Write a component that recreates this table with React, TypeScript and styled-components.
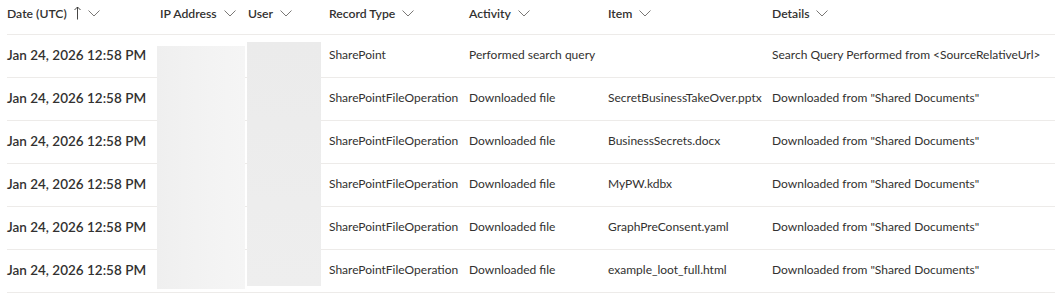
import React from "react";
import styled, { createGlobalStyle } from "styled-components";

const Global = createGlobalStyle`
  html, body { margin: 0; padding: 0; background: #ffffff; }
  body { font-family: Lato, "Noto Sans", sans-serif; color: #323130; }
`;

const Wrap = styled.div`
  position: relative;
  width: 1055px;
  height: 293px;
  overflow: hidden;
  padding-left: 7px;
  box-sizing: border-box;
`;

const COLS = "153px 88px 81px 140px 139px 164px 1fr";

const HeaderRow = styled.div`
  display: grid;
  grid-template-columns: ${COLS};
  height: 35px;
  align-items: center;
  border-bottom: 1px solid #edebe9;
  box-sizing: border-box;
`;

const HeadCell = styled.div`
  display: flex;
  align-items: center;
  gap: 7px;
  font-size: 12.2px;
  font-weight: 600;
  color: #323130;
  white-space: nowrap;
  padding-bottom: 8px;
`;

const Row = styled.div`
  display: grid;
  grid-template-columns: ${COLS};
  height: 43px;
  align-items: center;
  border-bottom: 1px solid #edebe9;
  box-sizing: border-box;
`;

const Cell = styled.div<{ $strong?: boolean }>`
  font-size: ${(p) => (p.$strong ? "13.5px" : "12px")};
  font-weight: ${(p) => (p.$strong ? 600 : 400)};
  color: #323130;
  white-space: nowrap;
  padding-bottom: 3px;
`;

const Redact = styled.div<{ $left: number; $top: number; $w: number; $h: number; $tone: string }>`
  position: absolute;
  left: ${(p) => p.$left}px;
  top: ${(p) => p.$top}px;
  width: ${(p) => p.$w}px;
  height: ${(p) => p.$h}px;
  background: ${(p) => p.$tone};
`;

const Chevron = () => (
  <svg width="12" height="7" viewBox="0 0 12 7" fill="none">
    <path d="M0.5 0.5 L6 6 L11.5 0.5" stroke="#7a7876" strokeWidth="1" />
  </svg>
);

const UpArrow = () => (
  <svg width="7" height="14" viewBox="0 0 7 14" fill="none">
    <path d="M3.5 13.5 V1 M0.5 4 L3.5 1 L6.5 4" stroke="#323130" strokeWidth="0.9" />
  </svg>
);

const headers = ["IP Address", "User", "Record Type", "Activity", "Item", "Details"];

type Rec = { type: string; activity: string; item: string; details: string };

const rows: Rec[] = [
  { type: "SharePoint", activity: "Performed search query", item: "", details: "Search Query Performed from <SourceRelativeUrl>" },
  { type: "SharePointFileOperation", activity: "Downloaded file", item: "SecretBusinessTakeOver.pptx", details: 'Downloaded from "Shared Documents"' },
  { type: "SharePointFileOperation", activity: "Downloaded file", item: "BusinessSecrets.docx", details: 'Downloaded from "Shared Documents"' },
  { type: "SharePointFileOperation", activity: "Downloaded file", item: "MyPW.kdbx", details: 'Downloaded from "Shared Documents"' },
  { type: "SharePointFileOperation", activity: "Downloaded file", item: "GraphPreConsent.yaml", details: 'Downloaded from "Shared Documents"' },
  { type: "SharePointFileOperation", activity: "Downloaded file", item: "example_loot_full.html", details: 'Downloaded from "Shared Documents"' },
];

export default function App() {
  return (
    <Wrap>
      <Global />
      <HeaderRow>
        <HeadCell>
          Date (UTC)
          <UpArrow />
          <Chevron />
        </HeadCell>
        {headers.map((h) => (
          <HeadCell key={h}>
            {h}
            <Chevron />
          </HeadCell>
        ))}
      </HeaderRow>
      {rows.map((r, i) => (
        <Row key={i}>
          <Cell $strong>Jan 24, 2026 12:58 PM</Cell>
          <Cell />
          <Cell />
          <Cell>{r.type}</Cell>
          <Cell>{r.activity}</Cell>
          <Cell>{r.item}</Cell>
          <Cell>{r.details}</Cell>
        </Row>
      ))}
      <Redact $left={157} $top={46} $w={88} $h={243} $tone="linear-gradient(90deg, #efefef, #f3f3f3 60%, #f5f5f5)" />
      <Redact $left={247} $top={42} $w={74} $h={244} $tone="linear-gradient(180deg, #ebebeb, #eeeeee)" />
    </Wrap>
  );
}
